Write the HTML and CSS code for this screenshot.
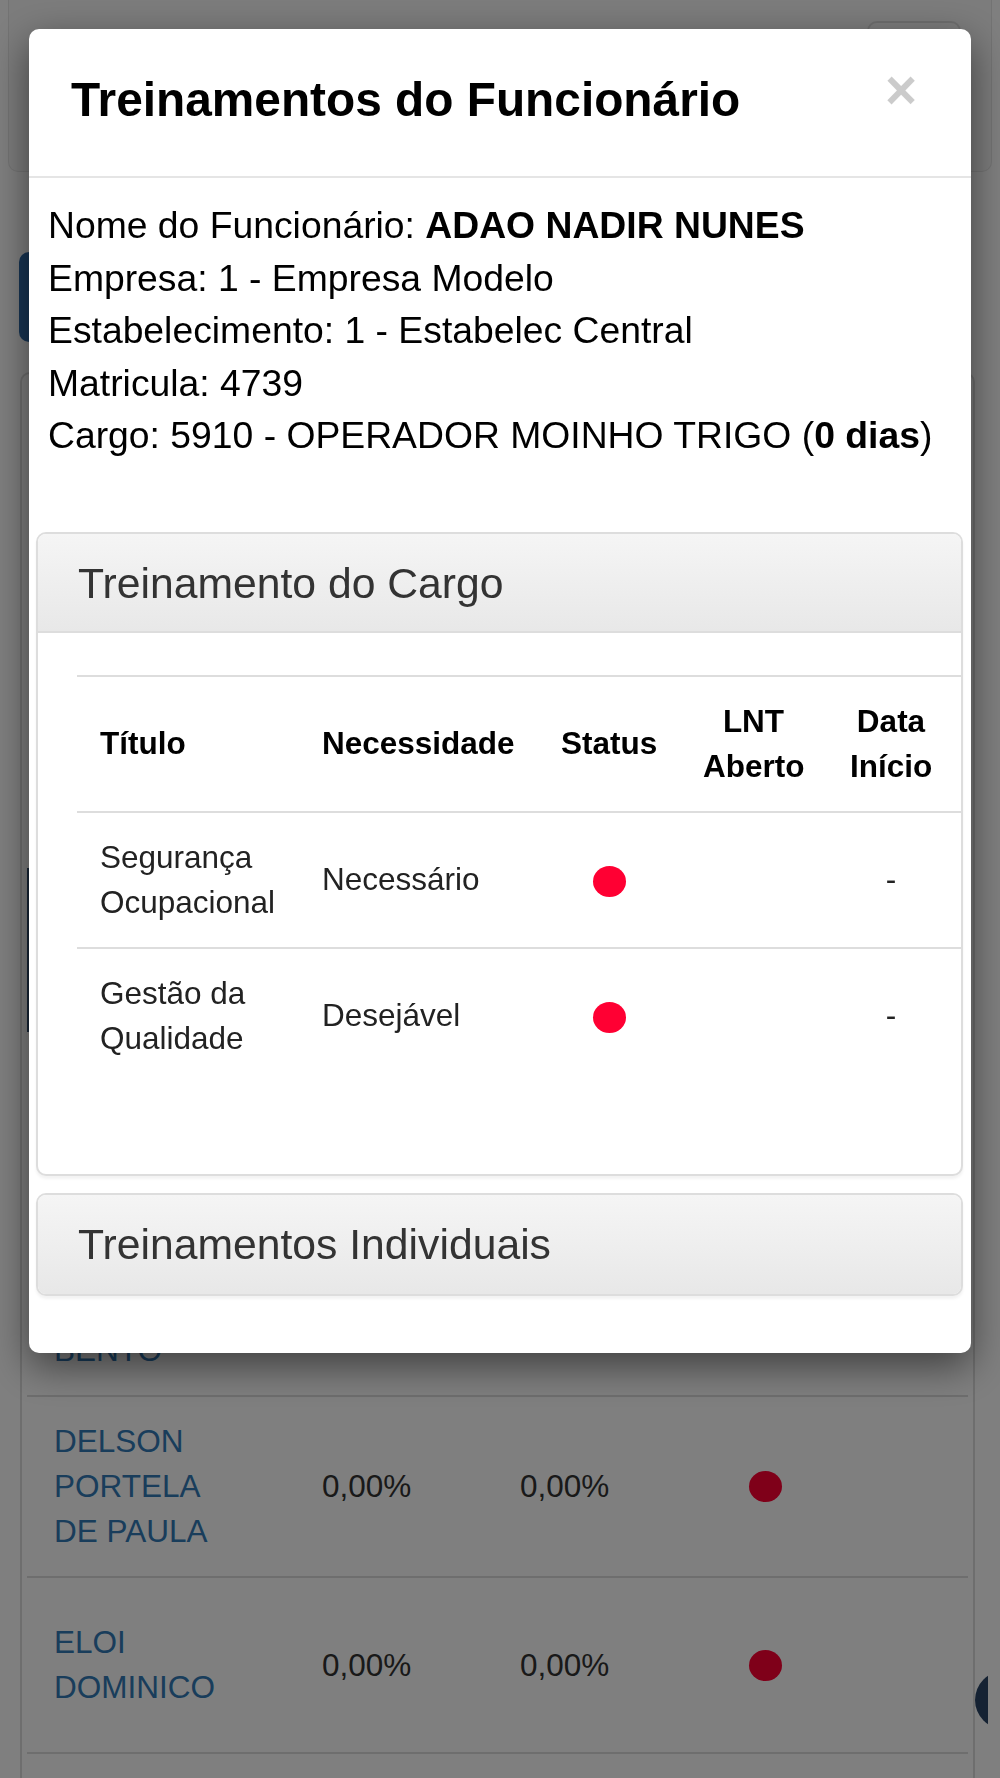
FILE: index.html
```html
<!DOCTYPE html>
<html lang="pt-BR">
<head>
    <meta charset="UTF-8">
    <meta name="viewport" content="width=device-width, initial-scale=1.0">
    <title>Treinamentos do Funcionário</title>
    <link rel="stylesheet" href="styles.css">
</head>
<body>
    <div class="page">
        <div class="navbar">
            <span class="navbar-toggle"></span>
        </div>

        <div class="btn-primary"></div>

        <div class="list-panel">
            <div class="list-head"></div>
            <div class="list-row row-first">
                <a class="name">BENTO</a>
            </div>
            <div class="list-row">
                <a class="name">DELSON<br>PORTELA<br>DE PAULA</a>
                <span>0,00%</span>
                <span>0,00%</span>
                <span class="dot"></span>
            </div>
            <div class="list-row row-tall">
                <a class="name">ELOI<br>DOMINICO</a>
                <span>0,00%</span>
                <span>0,00%</span>
                <span class="dot"></span>
            </div>
            <div class="list-row row-empty"></div>
        </div>

        <div class="fab-edge"><span class="fab"></span></div>
    </div>

    <div class="backdrop"></div>

    <div class="modal">
        <div class="modal-header">
            <h4 class="modal-title">Treinamentos do Funcionário</h4>
            <span class="close">&times;</span>
        </div>
        <div class="modal-body">
            <div class="info">
                <div>Nome do Funcionário: <b>ADAO NADIR NUNES</b></div>
                <div>Empresa: 1 - Empresa Modelo</div>
                <div>Estabelecimento: 1 - Estabelec Central</div>
                <div>Matricula: 4739</div>
                <div>Cargo: 5910 - OPERADOR MOINHO TRIGO (<b>0 dias</b>)</div>
            </div>

            <div class="panel">
                <div class="panel-heading">
                    <h3 class="panel-title">Treinamento do Cargo</h3>
                </div>
                <div class="panel-body">
                    <table class="trainings">
                        <colgroup>
                            <col class="c-titulo">
                            <col class="c-nec">
                            <col class="c-status">
                            <col class="c-lnt">
                            <col class="c-data">
                            <col>
                        </colgroup>
                        <thead>
                            <tr>
                                <th>Título</th>
                                <th>Necessidade</th>
                                <th class="center">Status</th>
                                <th class="center">LNT<br>Aberto</th>
                                <th class="center">Data<br>Início</th>
                                <th></th>
                            </tr>
                        </thead>
                        <tbody>
                            <tr>
                                <td>Segurança Ocupacional</td>
                                <td>Necessário</td>
                                <td class="center"><span class="dot"></span></td>
                                <td class="center"></td>
                                <td class="center">-</td>
                                <td></td>
                            </tr>
                            <tr>
                                <td>Gestão da Qualidade</td>
                                <td>Desejável</td>
                                <td class="center"><span class="dot"></span></td>
                                <td class="center"></td>
                                <td class="center">-</td>
                                <td></td>
                            </tr>
                        </tbody>
                    </table>
                </div>
            </div>

            <div class="panel panel-closed">
                <div class="panel-heading">
                    <h3 class="panel-title">Treinamentos Individuais</h3>
                </div>
            </div>
        </div>
    </div>
</body>
</html>
```

FILE: styles.css
```css
html, body {
    margin: 0;
    height: 100%;
    overflow: hidden;
}
body {
    font-family: "Liberation Sans", Arial, sans-serif;
    background-color: #fff;
    color: #333;
}

/* page behind the modal */
.page {
    height: 1778px;
}
.navbar {
    height: 171px;
    margin: 0 8px;
    background-color: #f8f8f8;
    border: 1px solid #e7e7e7;
    border-top: none;
    border-radius: 0 0 10px 10px;
    display: flex;
    justify-content: flex-end;
    align-items: flex-start;
    padding-right: 30px;
}
.navbar-toggle {
    width: 90px;
    height: 90px;
    margin-top: 21px;
    border: 2px solid #ddd;
    border-radius: 10px;
}
.btn-primary {
    width: 300px;
    height: 90px;
    margin: 80px 0 0 19px;
    background-color: #2f6aa8;
    border-radius: 10px;
}
.list-panel {
    width: 955px;
    margin: 30px 0 0 20px;
    padding: 494px 5px 0;
    box-sizing: border-box;
    border: 2px solid #ddd;
    border-radius: 10px;
    background-color: #fff;
}
.list-head {
    height: 164px;
    background-color: #2f4a6d;
}
.list-row {
    display: grid;
    grid-template-columns: 268px 198px 200px 90px 1fr;
    align-items: center;
    padding: 22px 0 22px 27px;
    border-top: 2px solid #ddd;
    font-size: 31.5px;
    line-height: 45px;
    color: #333;
}
.list-row .name {
    color: #337ab7;
}
.list-row .dot {
    justify-self: center;
}
.row-first {
    border-top: none;
    height: 319px;
    align-items: end;
}
.row-tall {
    height: 130px;
}
.row-empty {
    height: 60px;
}
/* round button at the right edge, mostly off screen */
.fab-edge {
    position: fixed;
    left: 975px;
    top: 1671px;
    width: 13px;
    height: 58px;
    overflow: hidden;
}
.fab {
    display: block;
    width: 58px;
    height: 58px;
    border-radius: 50%;
    background-color: #2a4466;
}

.backdrop {
    position: fixed;
    inset: 0;
    background-color: rgba(0, 0, 0, 0.5);
}

/* modal */
.modal {
    position: fixed;
    left: 29px;
    top: 29px;
    width: 942px;
    background-color: #fff;
    border-radius: 10px;
    box-shadow: 0 13px 39px rgba(0, 0, 0, 0.5);
}
.modal-header {
    display: flex;
    justify-content: space-between;
    align-items: flex-start;
    padding: 45px 54px 50px 42px;
    border-bottom: 2px solid #e5e5e5;
}
.modal-title {
    margin: 0;
    font-size: 47.8px;
    line-height: 52px;
    font-weight: bold;
    color: #000;
}
.close {
    margin-top: -11px;
    font-size: 55px;
    line-height: 1;
    font-weight: bold;
    color: #000;
    opacity: 0.2;
}
.modal-body {
    padding: 21px 8px 57px 7px;
}
.info {
    padding: 0 12px;
    font-size: 37.3px;
    line-height: 52.5px;
    color: #000;
    white-space: nowrap;
}

.panel {
    margin-top: 70px;
    border: 2px solid #ddd;
    border-radius: 10px;
    background-color: #fff;
    box-shadow: 0 3px 3px rgba(0, 0, 0, 0.05);
    overflow: hidden;
}
.panel-heading {
    padding: 26px 40px 25px;
    background-image: linear-gradient(#f5f5f5, #e8e8e8);
    border-bottom: 2px solid #ddd;
}
.panel-title {
    margin: 0;
    font-size: 42.7px;
    line-height: 46px;
    font-weight: normal;
    color: #333;
}
.panel-body {
    padding: 42px 0 39px 39px;
    overflow: hidden;
}
.panel-closed {
    margin-top: 17px;
}
.panel-closed .panel-heading {
    border-bottom-color: #e8e8e8;
}

.trainings {
    width: 923px;
    table-layout: fixed;
    border-collapse: collapse;
    margin-bottom: 52px;
    font-size: 31.5px;
    line-height: 45px;
}
.c-titulo { width: 222px; }
.c-nec { width: 239px; }
.c-status { width: 142px; }
.c-lnt { width: 147px; }
.c-data { width: 128px; }
.trainings th,
.trainings td {
    padding: 22px 23px;
    border-top: 2px solid #ddd;
    vertical-align: middle;
    text-align: left;
}
.trainings th {
    font-weight: bold;
    color: #000;
}
.trainings td {
    color: #222;
}
.trainings .center {
    text-align: center;
}
.dot {
    display: inline-block;
    width: 33px;
    height: 31px;
    border-radius: 50%;
    background-color: #ff0033;
    vertical-align: middle;
}
```
